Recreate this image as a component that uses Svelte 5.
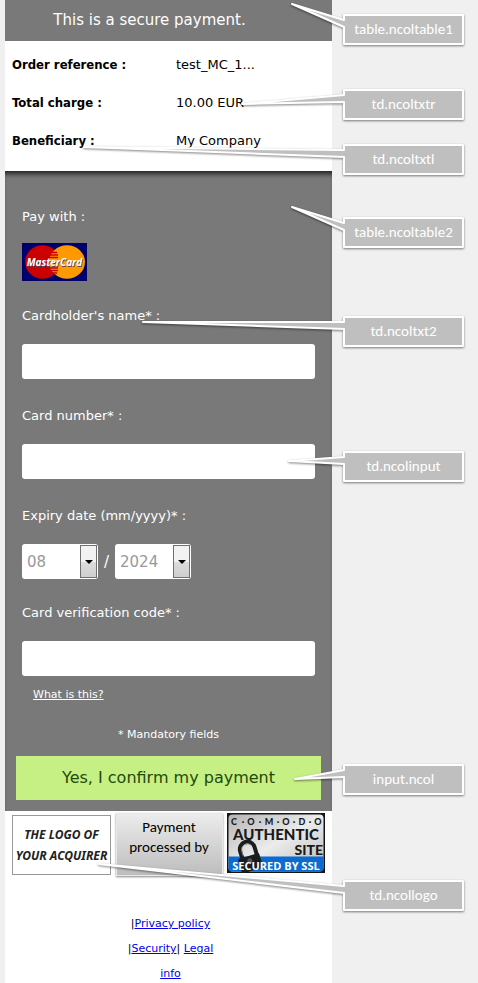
<script>
  const summary = [
    { label: 'Order reference :', value: 'test_MC_1...' },
    { label: 'Total charge :', value: '10.00 EUR' },
    { label: 'Beneficiary :', value: 'My Company' }
  ];

  const months = ['01', '02', '03', '04', '05', '06', '07', '08', '09', '10', '11', '12'];
  const years = ['2023', '2024', '2025', '2026', '2027', '2028'];

  // tip is the pointer's end, measured from the callout's top left corner
  const callouts = [
    { text: 'table.ncoltable1', top: 14, tip: [-51, -10] },
    { text: 'td.ncoltxtr', top: 89, tip: [-101, 15] },
    { text: 'td.ncoltxtl', top: 144, tip: [-259, 3] },
    { text: 'table.ncoltable2', top: 217, tip: [-51, -10] },
    { text: 'td.ncoltxt2', top: 316, tip: [-200, 6] },
    { text: 'td.ncolinput', top: 451, tip: [-54, 10] },
    { text: 'input.ncol', top: 764, tip: [-48, 15] },
    { text: 'td.ncollogo', top: 880, tip: [-244, -16] }
  ];

  let month = $state('08');
  let year = $state('2024');
</script>

<div class="page">
  <main class="sheet">
    <h1>This is a secure payment.</h1>

    <table class="summary">
      <tbody>
        {#each summary as row}
          <tr>
            <th scope="row">{row.label}</th>
            <td>{row.value}</td>
          </tr>
        {/each}
      </tbody>
    </table>

    <form onsubmit={(e) => e.preventDefault()}>
      <div class="fields">
        <p class="caption">Pay with :</p>
        <svg class="brand" viewBox="0 0 65 38" role="img" aria-label="MasterCard">
          <rect width="65" height="38" fill="#00006a" />
          <ellipse cx="20.5" cy="19" rx="17.3" ry="16.7" fill="#cc0000" />
          <ellipse cx="45" cy="19" rx="18" ry="16.7" fill="#ff9900" />
          <path d="M29 9.5h6M28 12h8M27 14.5h9M27 25h9M28 27.5h8M30 30h5" stroke="#cc0000" stroke-width="1.3" />
          <text x="33" y="23.5" class="brand-shade">MasterCard</text>
          <text x="32.5" y="23" class="brand-name">MasterCard</text>
        </svg>

        <label class="after-brand" for="holder">Cardholder's name* :</label>
        <input id="holder" type="text" autocomplete="cc-name" />

        <label for="number">Card number* :</label>
        <input id="number" type="text" inputmode="numeric" autocomplete="cc-number" />

        <label for="month">Expiry date (mm/yyyy)* :</label>
        <div class="expiry">
          <span class="select">
            <select id="month" bind:value={month}>
              {#each months as m}<option>{m}</option>{/each}
            </select>
          </span>
          <span class="slash">/</span>
          <span class="select">
            <select aria-label="Expiry year" bind:value={year}>
              {#each years as y}<option>{y}</option>{/each}
            </select>
          </span>
        </div>

        <label class="after-expiry" for="cvc">Card verification code* :</label>
        <input id="cvc" type="text" inputmode="numeric" autocomplete="cc-csc" />
        <a class="help" href="#cvc">What is this?</a>
        <p class="mandatory">* Mandatory fields</p>
      </div>
      <button type="submit">Yes, I confirm my payment</button>
    </form>

    <div class="logos">
      <div class="acquirer">THE LOGO OF<br />YOUR ACQUIRER</div>
      <div class="processor">Payment<br />processed by</div>
      <svg class="seal" viewBox="0 0 98 60" role="img" aria-label="Comodo authentic site, secured by SSL">
        <defs>
          <linearGradient id="metal" x1="0" y1="0" x2="1" y2="1">
            <stop offset="0" stop-color="#b4b4b4" />
            <stop offset="0.5" stop-color="#ececec" />
            <stop offset="1" stop-color="#b8b8b8" />
          </linearGradient>
        </defs>
        <rect width="98" height="60" fill="#151515" />
        <rect x="1.5" y="1.5" width="95" height="57" rx="4" fill="url(#metal)" />
        <path d="M1.5 43.5h95v11a4 4 0 0 1-4 4h-87a4 4 0 0 1-4-4z" fill="#0b6bd0" />
        <text y="12" class="comodo" x="7 16 24 33 42 51 59 67 75 83 91">C·O·M·O·D·O</text>
        <text x="49" y="27" class="authentic">AUTHENTIC</text>
        <text x="96" y="42" class="site">SITE</text>
        <g transform="rotate(-17 22 45)">
          <path d="M15.5 44V36a7.5 7.5 0 0 1 15 0v8" fill="none" stroke="#1c1c1c" stroke-width="4" />
          <path d="M17 41v-4.5a6 6 0 0 1 11 -3" fill="none" stroke="#8d8d8d" stroke-width="0.8" />
          <rect x="11" y="43" width="22" height="15" rx="1.5" fill="#1c1c1c" />
          <circle cx="22" cy="48" r="2.5" fill="#555" />
        </g>
        <text x="49" y="57" class="secured">SECURED BY SSL</text>
      </svg>
    </div>

    <footer>
      <div>|<a href="#privacy">Privacy policy</a></div>
      <div>|<a href="#security">Security</a>| <a href="#legal">Legal<br />info</a></div>
    </footer>
  </main>

  {#each callouts as c}
    <div class="callout" style="top: {c.top}px">
      <svg viewBox="0 0 121 31" aria-hidden="true">
        <path d="M1 1H120V30H1V13L{c.tip[0]} {c.tip[1]}L1 6Z" />
      </svg>
      <span>{c.text}</span>
    </div>
  {/each}
</div>

<style>
  :global(body) {
    margin: 0;
    background: #f0f0f0;
  }

  .page {
    position: relative;
    padding: 0 146px 0 5px;
    overflow: hidden;
    font-family: Verdana, 'DejaVu Sans', sans-serif;
    font-size: 13px;
    line-height: 20px;
    color: #000;
  }

  .sheet {
    background: #fff;
  }

  h1 {
    margin: 0;
    padding-right: 38px;
    background: #797979;
    color: #fff;
    font-size: 15px;
    font-weight: normal;
    line-height: 41px;
    text-align: center;
  }

  .summary {
    width: 100%;
    height: 130px;
    padding: 5px 7px 11px;
    border-spacing: 0;
  }

  th,
  td {
    height: 38px;
    padding: 0;
    text-align: left;
  }

  th {
    width: 164px;
    font-family: 'DejaVu Sans Condensed', 'DejaVu Sans', sans-serif;
  }

  form {
    padding: 36px 11px 11px;
    background: #797979;
    box-shadow: inset 0 6px 5px -3px #222;
    color: #fff;
  }

  .fields {
    display: flex;
    flex-direction: column;
    align-items: flex-start;
    padding: 0 6px;
  }

  .caption {
    margin: 0 0 16px;
  }

  .brand {
    width: 65px;
    height: 38px;
  }

  .brand text {
    font-family: 'Open Sans', sans-serif;
    font-size: 10px;
    font-style: italic;
    font-weight: bold;
    text-anchor: middle;
  }

  .brand-shade {
    fill: #444466;
  }

  .brand-name {
    fill: #fff;
  }

  label {
    margin: 27px 0 18px;
  }

  .after-brand {
    margin-top: 25px;
  }

  .after-expiry {
    margin-top: 24px;
  }

  input {
    width: 100%;
    height: 35px;
    box-sizing: border-box;
    padding: 0 6px;
    border: 0;
    border-radius: 3px;
    background: #fff;
    font: inherit;
  }

  .expiry {
    display: flex;
    align-items: center;
    gap: 6px;
    font-size: 15px;
  }

  .slash {
    width: 5px;
  }

  .select {
    position: relative;
    display: flex;
  }

  .select::before {
    content: '';
    position: absolute;
    top: 1px;
    right: 1px;
    width: 15px;
    height: 31px;
    border: 1px solid #707070;
    background: linear-gradient(#f2f2f2 50%, #dcdcdc 50%, #cfcfcf);
    pointer-events: none;
  }

  .select::after {
    content: '';
    position: absolute;
    top: 16px;
    right: 5px;
    border: 4px solid transparent;
    border-top-color: #000;
    border-bottom: 0;
    pointer-events: none;
  }

  select {
    appearance: none;
    width: 76px;
    height: 35px;
    padding: 0 18px 0 5px;
    border: 0;
    border-radius: 3px;
    background: #fff;
    color: #999;
    font: inherit;
  }

  .help {
    margin: 9px 0 0 11px;
    color: #fff;
    font-size: 11px;
  }

  .mandatory {
    align-self: center;
    margin: 20px 0 11px;
    font-size: 11px;
  }

  button {
    display: block;
    width: 100%;
    height: 44px;
    border: 0;
    background: #c6ef84;
    color: #1f4a0c;
    font: inherit;
    font-size: 16px;
  }

  .logos {
    display: flex;
    align-items: flex-start;
    justify-content: space-between;
    padding: 2px 7px 0;
  }

  .acquirer {
    width: 97px;
    height: 50px;
    margin-top: 2px;
    padding-top: 8px;
    border: 1px solid #999;
    color: #222;
    font: italic bold 12px/21px 'Noto Sans', sans-serif;
    text-align: center;
    white-space: nowrap;
  }

  .processor {
    width: 105px;
    height: 58px;
    padding-top: 3px;
    border: 1px solid #e8e8e8;
    background: linear-gradient(#ececec, #bdbdbd);
    box-shadow: 0 1px 2px #888;
    font: 15px/20px Carlito, Lato, sans-serif;
    text-align: center;
  }

  .seal {
    width: 98px;
    height: 60px;
  }

  .seal text {
    font-family: Lato, sans-serif;
    font-weight: 900;
    text-anchor: middle;
    fill: #1a1a1a;
  }

  .seal .comodo {
    font-size: 9px;
  }

  .seal .authentic {
    font-size: 15px;
  }

  .seal .site {
    font-size: 14px;
    text-anchor: end;
  }

  .seal .secured {
    font-family: 'Open Sans', sans-serif;
    font-size: 11px;
    font-weight: bold;
    fill: #fff;
  }

  footer {
    width: 90px;
    margin: 0 auto;
    padding: 35px 0 0 4px;
    font-size: 11px;
    line-height: 25px;
    text-align: center;
    white-space: nowrap;
  }

  footer a {
    color: #00e;
  }

  .callout {
    position: absolute;
    right: 14px;
    width: 121px;
    height: 31px;
    color: #fff;
    font: 15px/31px Carlito, Lato, sans-serif;
    text-align: center;
    pointer-events: none;
  }

  .callout svg {
    position: absolute;
    inset: 0;
    width: 121px;
    height: 31px;
    overflow: visible;
    filter: drop-shadow(0 1px 1px rgba(0, 0, 0, 0.5));
  }

  .callout path {
    fill: #bfbfbf;
    stroke: #fff;
    stroke-width: 2;
    stroke-linejoin: round;
  }

  .callout span {
    position: relative;
  }
</style>
